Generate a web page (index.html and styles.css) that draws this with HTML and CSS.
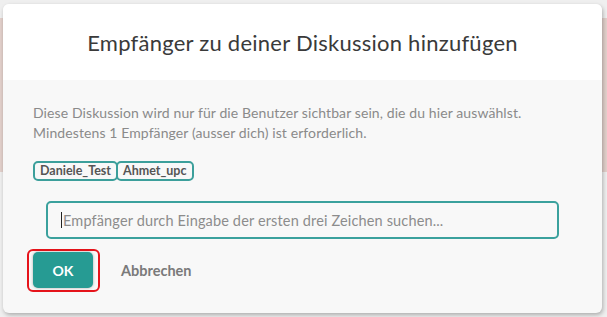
FILE: index.html
```html
<!DOCTYPE html>
<html lang="de">
<head>
<meta charset="utf-8">
<link rel="stylesheet" href="styles.css">
</head>
<body>
<div class="backdrop">
  <div class="band"></div>
</div>
<div class="modal">
  <div class="modal-header">
    <h1 class="title">Empfänger zu deiner Diskussion hinzufügen</h1>
  </div>
  <div class="modal-body">
    <p class="intro">Diese Diskussion wird nur für die Benutzer sichtbar sein, die du hier auswählst.<br>Mindestens 1 Empfänger (ausser dich) ist erforderlich.</p>
    <div class="tags">
      <span class="tag">Daniele_Test</span><span class="tag">Ahmet_upc</span>
    </div>
    <div class="search">
      <span class="caret"></span><span class="placeholder">Empfänger durch Eingabe der ersten drei Zeichen suchen...</span>
    </div>
    <div class="actions">
      <span class="focus-ring"><button class="btn-ok">OK</button></span>
      <button class="btn-cancel">Abbrechen</button>
    </div>
  </div>
</div>
</body>
</html>
```

FILE: styles.css
```css
html, body {
  margin: 0;
  padding: 0;
}
body {
  width: 607px;
  height: 317px;
  background: #efefef;
  font-family: Lato, "Liberation Sans", sans-serif;
  position: relative;
  overflow: hidden;
}
.backdrop {
  position: absolute;
  inset: 0;
  padding-top: 18px;
}
.band {
  height: 154px;
  background: #e2d0cb;
}
.modal {
  position: absolute;
  left: 3px;
  top: 4px;
  width: 599px;
  height: 309px;
  border-radius: 6px;
  overflow: hidden;
  background: #f8f8f8;
  box-shadow: 1px 2px 4px rgba(0,0,0,0.28);
  display: flex;
  flex-direction: column;
}
.modal-header {
  height: 76px;
  background: #ffffff;
  display: flex;
  align-items: center;
  justify-content: center;
}
.title {
  margin: 0;
  font-weight: 400;
  font-size: 22px;
  letter-spacing: 0.25px;
  color: #3a3a3a;
}
.modal-body {
  padding: 23px 30px 0 30px;
  display: flex;
  flex-direction: column;
}
.intro {
  margin: 0;
  font-size: 14px;
  letter-spacing: 0.1px;
  line-height: 20px;
  color: #8a8a8a;
}
.tags {
  margin-top: 18px;
  display: flex;
}
.tag {
  height: 16px;
  line-height: 16px;
  padding: 0 5px;
  border: 2px solid #3c9f9b;
  border-radius: 5px;
  font-size: 12.5px;
  font-weight: 700;
  color: #555;
  margin-right: -2px;
}
.search {
  margin: 20px 13px 0 13px;
  height: 34px;
  border: 2px solid #3ba19d;
  border-radius: 5px;
  display: flex;
  align-items: center;
  padding-left: 13px;
}
.caret {
  width: 1px;
  height: 16px;
  background: #222;
  margin-right: 1px;
}
.placeholder {
  font-size: 14.5px;
  letter-spacing: 0.15px;
  color: #8c8c8c;
}
.actions {
  margin-top: 10px;
  display: flex;
  align-items: center;
}
.focus-ring {
  display: inline-flex;
  padding: 1px 5px 2px 4px;
  margin-left: -6px;
  border: 2px solid #e6141b;
  border-radius: 6px;
}
.btn-ok {
  width: 60px;
  height: 36px;
  border: none;
  border-radius: 5px;
  background: #269b93;
  color: #fff;
  font-family: Lato, "Liberation Sans", sans-serif;
  font-weight: 700;
  font-size: 14px;
  box-shadow: 0 0 3px rgba(0,0,0,0.3);
}
.btn-cancel {
  margin-left: 21px;
  border: none;
  background: none;
  padding: 0;
  color: #7a7a7a;
  font-family: Lato, "Liberation Sans", sans-serif;
  font-weight: 700;
  font-size: 14.5px;
}
```
